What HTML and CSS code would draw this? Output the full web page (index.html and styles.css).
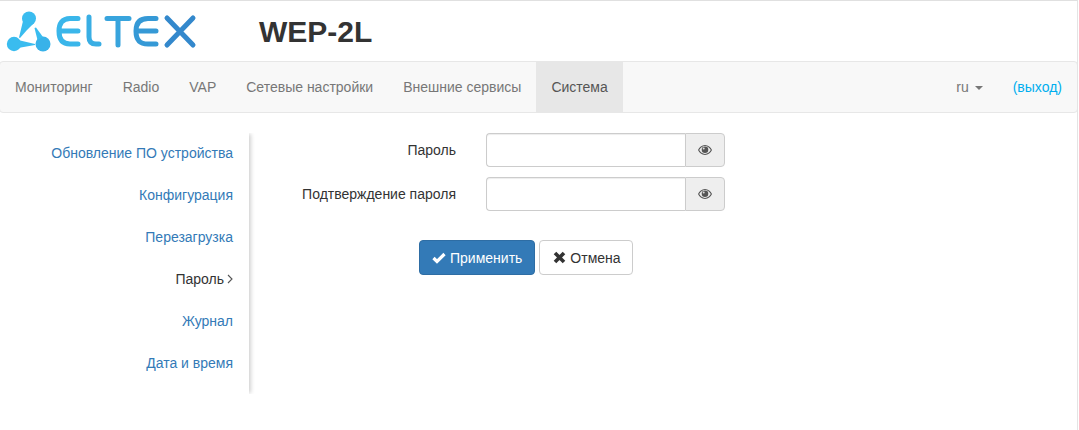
FILE: index.html
```html
<!DOCTYPE html>
<html lang="ru">
<head>
<meta charset="utf-8">
<title>WEP-2L</title>
<link rel="stylesheet" href="styles.css">
</head>
<body>
<div class="page">
  <header class="header">
    <svg class="logo" width="200" height="60" viewBox="0 0 200 60" role="img" aria-label="ELTEX">
      <g fill="#3abcef">
        <circle cx="29" cy="17.500" r="7"/>
        <circle cx="14" cy="43" r="7.200"/>
        <circle cx="43" cy="43" r="7.500" fill="#38b2e9"/>
        <path d="M23 20 L33 23 L27 29 L20 37 L19 36.500Z"/>
        <path d="M34.500 27 L36 26.500 L43 36 L37.500 39Z"/>
        <path d="M18 39 L35 43 L35 44 L18 47Z"/>
      </g>
      <g fill="none" stroke-width="5" stroke-linecap="round" stroke-linejoin="round">
        <path stroke="#3ab6ea" d="M78 17.500 H70 C62 17.500 59 23 59 30 C59 38 62 43 70 43 H78 M60 30 H78"/>
        <path stroke="#39aee4" d="M89 16 V36 Q89 43 96 43 H99"/>
        <path stroke="#38a4dd" d="M107 17.500 H129 M118 17.500 V44"/>
        <path stroke="#3599d6" d="M156 17.500 H148 C139 17.500 136 23 136 30 C136 38 139 43 148 43 H156 M137 30 H156"/>
        <path stroke="#3388cc" d="M167 17 L193 44 M193 17 L167 44"/>
      </g>
    </svg>
    <h1 class="device">WEP-2L</h1>
  </header>
  <nav class="navbar">
    <ul class="nav">
      <li><a href="#">Мониторинг</a></li>
      <li><a href="#">Radio</a></li>
      <li><a href="#">VAP</a></li>
      <li><a href="#">Сетевые настройки</a></li>
      <li><a href="#">Внешние сервисы</a></li>
      <li class="active"><a href="#">Система</a></li>
    </ul>
    <ul class="nav nav-right">
      <li><a href="#">ru <span class="caret"></span></a></li>
      <li><a href="#" class="logout">(выход)</a></li>
    </ul>
  </nav>
  <main class="content">
    <aside class="side">
      <a href="#">Обновление ПО устройства</a>
      <a href="#">Конфигурация</a>
      <a href="#">Перезагрузка</a>
      <a href="#" class="current">Пароль<svg class="chev" width="6" height="10" viewBox="0 0 6 10"><path d="M1 1 L5 5 L1 9" fill="none" stroke="#555" stroke-width="1.100"/></svg></a>
      <a href="#">Журнал</a>
      <a href="#">Дата и время</a>
    </aside>
    <form class="form">
      <div class="row">
        <label class="lbl">Пароль</label>
        <div class="group">
          <input class="input" type="password">
          <span class="addon"><svg class="eye" width="14" height="10" viewBox="0 0 14 10"><path fill="#555" fill-rule="evenodd" d="M7 0C3.800 0 1.300 2.300 0 5c1.300 2.700 3.800 5 7 5s5.700-2.300 7-5C12.700 2.300 10.200 0 7 0zM7 1.100C9.600 1.100 11.600 2.900 12.800 5 11.600 7.100 9.600 8.900 7 8.900S2.400 7.100 1.200 5C2.400 2.900 4.400 1.100 7 1.100z"/><circle cx="7" cy="4.800" r="3.300" fill="#555"/><circle cx="5.700" cy="3.400" r="1" fill="#ddd"/></svg></span>
        </div>
      </div>
      <div class="row">
        <label class="lbl">Подтверждение пароля</label>
        <div class="group">
          <input class="input" type="password">
          <span class="addon"><svg class="eye" width="14" height="10" viewBox="0 0 14 10"><path fill="#555" fill-rule="evenodd" d="M7 0C3.800 0 1.300 2.300 0 5c1.300 2.700 3.800 5 7 5s5.700-2.300 7-5C12.700 2.300 10.200 0 7 0zM7 1.100C9.600 1.100 11.600 2.900 12.800 5 11.600 7.100 9.600 8.900 7 8.900S2.400 7.100 1.200 5C2.400 2.900 4.400 1.100 7 1.100z"/><circle cx="7" cy="4.800" r="3.300" fill="#555"/><circle cx="5.700" cy="3.400" r="1" fill="#ddd"/></svg></span>
        </div>
      </div>
      <div class="actions">
        <button type="button" class="btn primary"><svg width="14" height="12" viewBox="0 0 14 12"><path d="M1.500 6 L5 9.500 L12.500 2" fill="none" stroke="#fff" stroke-width="3.200"/></svg>Применить</button>
        <button type="button" class="btn cancel"><svg width="13" height="13" viewBox="0 0 13 13"><path d="M2 2 L11 11 M11 2 L2 11" fill="none" stroke="#333" stroke-width="3.600"/></svg>Отмена</button>
      </div>
    </form>
  </main>
</div>
</body>
</html>
```
FILE: styles.css
```css
* { box-sizing: border-box; }
html, body { margin: 0; height: 100%; background: #fff; }
body {
  font-family: "Liberation Sans", Arial, sans-serif;
  font-size: 14px;
  line-height: 20px;
  color: #333;
}
.page {
  height: 430px;
  border-top: 1px solid #e0e0e0;
  border-right: 1px solid #e4e4e4;
  margin-right: 1px;
  overflow: hidden;
}
a { text-decoration: none; }
.header { display: flex; align-items: center; height: 60px; }
.logo { flex: none; margin-top: -1px; display: block; }
.device { margin: 0 0 0 59px; font-size: 30px; line-height: 33px; font-weight: 700; color: #333; }
.navbar {
  display: flex;
  justify-content: space-between;
  height: 52px;
  margin: 0 -1px;
  background: #f8f8f8;
  border: 1px solid #e7e7e7;
  border-radius: 4px;
}
.nav { display: flex; list-style: none; margin: 0; padding: 0; }
.nav a { display: block; padding: 15px; color: #777; height: 50px; }
.nav .active a { background: #e7e7e7; color: #555; }
.nav .logout { color: #00aeef; }
.caret {
  display: inline-block;
  width: 0;
  height: 0;
  margin-left: 2px;
  vertical-align: middle;
  border-top: 4px solid #777;
  border-left: 4px solid transparent;
  border-right: 4px solid transparent;
}
.content { display: flex; align-items: flex-start; padding-top: 20px; }
.side {
  width: 249px;
  flex: none;
  height: 261px;
  padding: 0 16px 0 0;
  box-shadow: 3px 0 4px -1px rgba(0,0,0,.18);
  clip-path: inset(0 -10px 0 0);
  display: flex;
  flex-direction: column;
  align-items: flex-end;
}
.side a { display: block; height: 42px; padding: 10px 0 12px; color: #337ab7; white-space: nowrap; }
.side .current { color: #333; }
.chev { margin-left: 3px; }
.form { flex: none; width: 476px; }
.row { display: flex; align-items: center; margin-bottom: 10px; height: 34px; }
.lbl { width: 207px; text-align: right; flex: none; }
.group { display: flex; margin-left: 30px; width: 239px; height: 34px; }
.input {
  flex: 1;
  min-width: 0;
  height: 34px;
  border: 1px solid #ccc;
  border-right: 0;
  border-radius: 4px 0 0 4px;
  box-shadow: inset 0 1px 1px rgba(0,0,0,.075);
  background: #fff;
}
.addon {
  width: 40px;
  flex: none;
  display: flex;
  align-items: center;
  justify-content: center;
  background: #eee;
  border: 1px solid #ccc;
  border-radius: 0 4px 4px 0;
}
.actions { display: flex; gap: 4px; margin: 29px 0 0 170px; }
.btn {
  display: flex;
  align-items: center;
  gap: 4px;
  height: 35px;
  padding: 0 12px;
  font: inherit;
  color: #333;
  background: #fff;
  border: 1px solid #ccc;
  border-radius: 4px;
}
.btn.primary { color: #fff; background: #337ab7; border-color: #2e6da4; }
.btn.cancel { padding: 0 11px 0 13px; }
```
